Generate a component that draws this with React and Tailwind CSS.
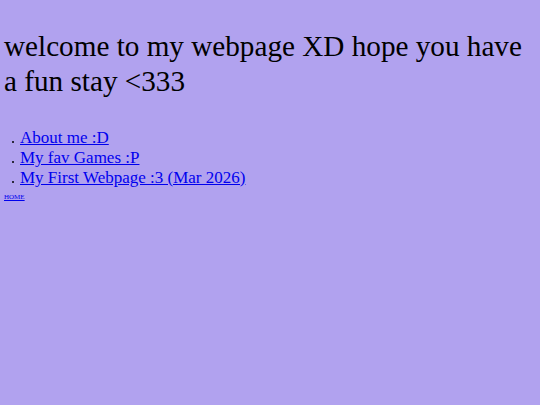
export default function App() {
  return (
    <div className="min-h-[405px] w-full bg-[#b1a2ef] px-[4px] pt-[29px] text-black" style={{ fontFamily: '"Liberation Serif", "Times New Roman", serif' }}>
      <h1 className="text-[29.2px] leading-[35px] font-normal">welcome to my webpage XD hope you have a fun stay &lt;333</h1>
      <ul className="mt-[29px] pl-[8px] text-[17px] leading-[20px]">
        {["About me :D", "My fav Games :P", "My First Webpage :3 (Mar 2026)"].map((t) => (
          <li key={t}>
            <span className="inline-block w-[2px] h-[2px] rounded-full bg-black mr-[6px]"></span>
            <a href="#" className="text-[#0000ee] underline">{t}</a>
          </li>
        ))}
      </ul>
      <a href="#" className="mt-[5px] block text-[7px] leading-[8px] text-[#0000ee] underline">HOME</a>
    </div>
  );
}
